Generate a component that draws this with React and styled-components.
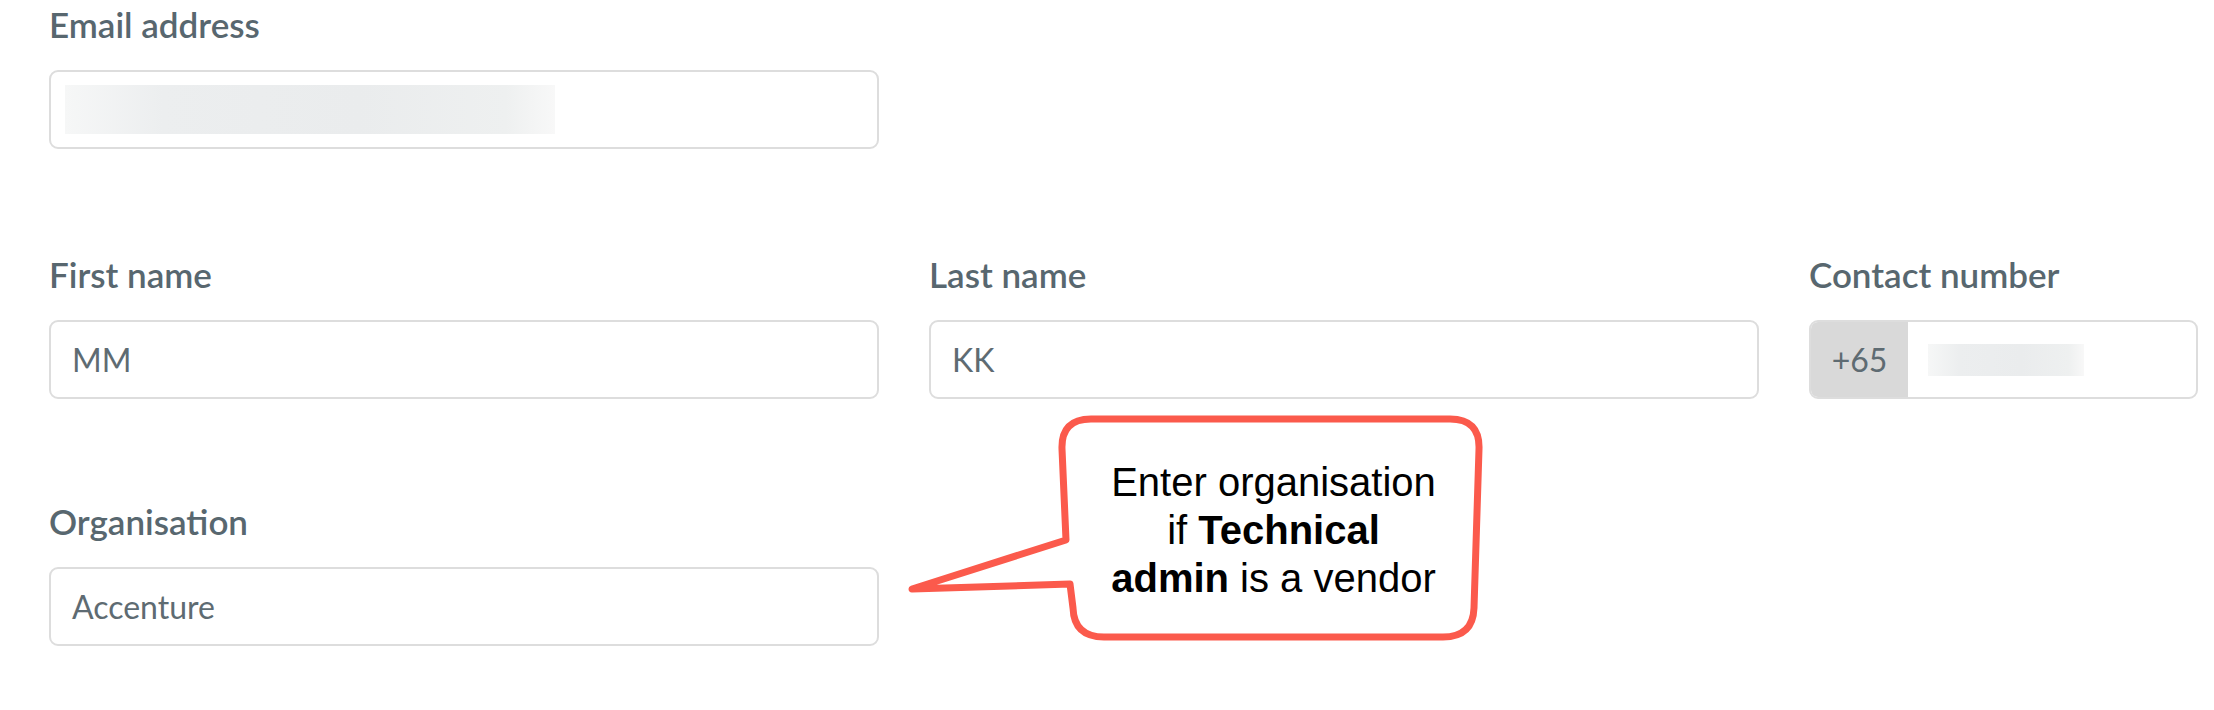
import styled, { createGlobalStyle } from 'styled-components';

const GlobalStyle = createGlobalStyle`
    html, body {
        margin: 0;
        padding: 0;
        background: #ffffff;
    }
    body {
        font-family: Lato, "Liberation Sans", sans-serif;
    }
`;

function Field({ label, value, width, children }) {
    return (
        <FieldWrapper $width={width}>
            <Label>{label}</Label>
            {children || (
                <InputBox>
                    {value ? <Value>{value}</Value> : <Redacted $width={490} $height={49} />}
                </InputBox>
            )}
        </FieldWrapper>
    );
}

function Callout() {
    return (
        <CalloutWrapper>
            <BubbleShape viewBox="900 405 595 245">
                <path
                    d="M 1091 419 L 1450 419 Q 1480 419 1479 449 L 1474 608 Q 1473 637 1443 637
                       L 1104 637 Q 1074 637 1073 608 L 1070 584 L 912 589 L 1066 540
                       L 1062 449 Q 1061 419 1091 419 Z"
                    fill="#ffffff"
                    stroke="#fb5a4c"
                    strokeWidth="7"
                    strokeLinejoin="round"
                />
            </BubbleShape>
            <CalloutText>
                Enter organisation<br />
                if <b>Technical</b><br />
                <b>admin</b> is a vendor
            </CalloutText>
        </CalloutWrapper>
    );
}

function App() {
    return (
        <Page>
            <GlobalStyle />
            <Section>
                <Field label="Email address" width={830} />
            </Section>
            <Row>
                <Field label="First name" value="MM" />
                <Field label="Last name" value="KK" />
                <Field label="Contact number">
                    <InputBox>
                        <Prefix>+65</Prefix>
                        <NumberPart>
                            <Redacted $width={156} $height={32} />
                        </NumberPart>
                    </InputBox>
                </Field>
            </Row>
            <Section>
                <Field label="Organisation" value="Accenture" width={830} />
            </Section>
            <Callout />
        </Page>
    );
}

const Page = styled.div`
    position: relative;
    width: 2214px;
    height: 710px;
    box-sizing: border-box;
    padding: 4px 0 0 49px;
    display: flex;
    flex-direction: column;
    gap: 105px;
    overflow: hidden;
`;

const Section = styled.div`
    display: flex;
`;

const Row = styled.div`
    display: grid;
    grid-template-columns: 830px 830px 389px;
    column-gap: 50px;
    margin-bottom: -3px;
`;

const FieldWrapper = styled.div`
    display: flex;
    flex-direction: column;
    width: ${({ $width }) => ($width ? `${$width}px` : 'auto')};
`;

const Label = styled.label`
    font-family: Lato, "Liberation Sans", sans-serif;
    font-size: 35px;
    font-weight: 600;
    line-height: 40px;
    color: #58676f;
    margin-bottom: 26px;
`;

const InputBox = styled.div`
    display: flex;
    align-items: center;
    height: 79px;
    box-sizing: border-box;
    border: 2px solid #dddddd;
    border-radius: 9px;
    overflow: hidden;
    background: #ffffff;
`;

const Value = styled.span`
    padding-left: 21px;
    font-family: Lato, "Liberation Sans", sans-serif;
    font-size: 32px;
    color: #5e6b72;
`;

const Redacted = styled.span`
    display: block;
    margin-left: 14px;
    width: ${({ $width }) => $width}px;
    height: ${({ $height }) => $height}px;
    background: linear-gradient(90deg, #f6f7f7 0%, #eceeef 20%, #eaeced 60%, #eef0f0 90%, #f8f8f8 100%);
`;

const Prefix = styled.div`
    display: flex;
    align-items: center;
    justify-content: center;
    width: 97px;
    height: 100%;
    background: #d9d9d9;
    font-family: Lato, "Liberation Sans", sans-serif;
    font-size: 32px;
    color: #5e6b72;
`;

const NumberPart = styled.div`
    display: flex;
    align-items: center;
    padding-left: 6px;
`;

const CalloutWrapper = styled.div`
    position: absolute;
    left: 900px;
    top: 405px;
    width: 595px;
    height: 245px;
    box-sizing: border-box;
    padding: 12px 8px 8px 160px;
    display: flex;
    align-items: center;
    justify-content: center;
`;

const BubbleShape = styled.svg`
    position: absolute;
    left: 0;
    top: 0;
    width: 100%;
    height: 100%;
`;

const CalloutText = styled.div`
    position: relative;
    font-family: "Liberation Sans", Arial, sans-serif;
    font-size: 40px;
    line-height: 48px;
    color: #000000;
    text-align: center;

    b {
        font-weight: 700;
    }
`;

export default App;
